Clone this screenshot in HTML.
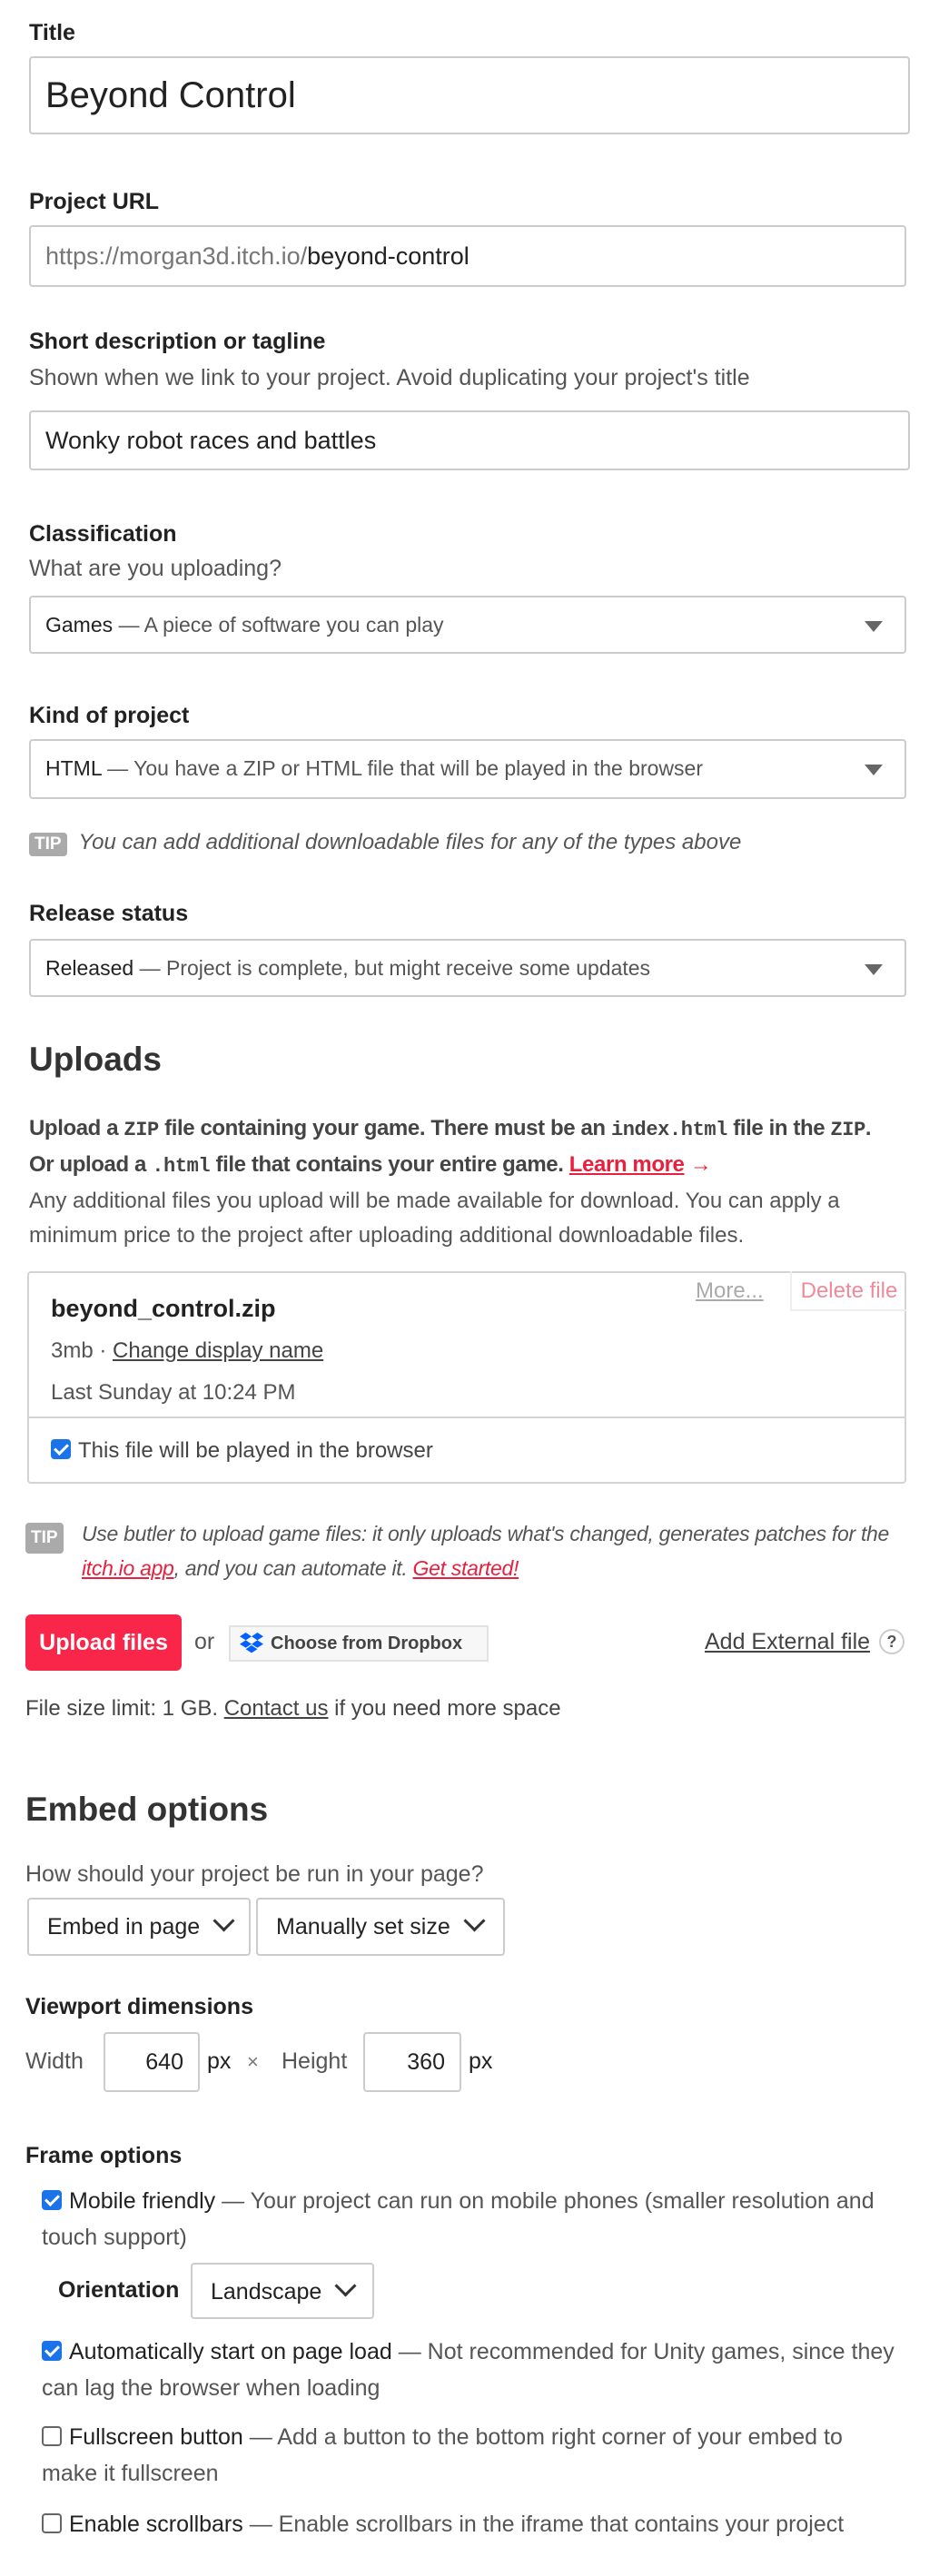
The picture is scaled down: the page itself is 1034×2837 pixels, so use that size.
<!DOCTYPE html>
<html><head><meta charset="utf-8"><style>
html,body{margin:0;padding:0;background:#fff}
body{zoom:2;width:517px;height:1418px;position:relative;overflow:hidden;font-family:"Liberation Sans",sans-serif;color:#222}
.a{position:absolute;white-space:nowrap}
.lbl{font-weight:bold;font-size:12.5px;color:#222}
.sub{font-size:12.5px;color:#555}
.box{position:absolute;border:1px solid #ccc;border-radius:2px;box-sizing:border-box;background:#fff}
.sel{font-size:11.5px;color:#222;line-height:30px;padding-left:8px}
.sel .g{color:#555}
.tri{position:absolute;right:12px;top:13px;width:0;height:0;border-left:5px solid transparent;border-right:5px solid transparent;border-top:6px solid #666}
.tip{display:inline-block;background:#aaa;color:#fff;font-size:9.5px;font-weight:bold;padding:1px 3px;border-radius:2px;font-style:normal}
.it{font-style:italic;font-size:12px;color:#555}
.red{color:#e8203e;text-decoration:underline}
.mono{font-family:"Liberation Mono",monospace;font-weight:bold;font-size:11px}
.cb{display:inline-block;width:11px;height:11px;border-radius:2px;vertical-align:-1px;margin-right:4px;box-sizing:border-box}
.cb.on{background:#1a73e8;position:relative}
.cb.on:after{content:"";position:absolute;left:3.5px;top:1px;width:3px;height:6px;border:solid #fff;border-width:0 1.6px 1.6px 0;transform:rotate(45deg)}
.cb.off{border:1px solid #666;background:#fff}
.chev{display:inline-block;width:7px;height:7px;border-right:1.5px solid #333;border-bottom:1.5px solid #333;transform:rotate(45deg);margin-left:9px;vertical-align:3px}
.dd{font-size:12.5px;color:#222;line-height:30px;padding-left:10px}
.opt{font-size:12.5px;color:#222}
.opt .g{color:#555}
</style></head><body>

<div class="a lbl" style="left:16px;top:11px">Title</div>
<div class="box" style="left:16px;top:31px;width:485px;height:43px;font-size:20px;line-height:41px;padding-left:8px;color:#222">Beyond Control</div>

<div class="a lbl" style="left:16px;top:104px">Project URL</div>
<div class="box" style="left:16px;top:124px;width:483px;height:34px;font-size:13.5px;line-height:32px;padding-left:8px"><span style="color:#777">https://morgan3d.itch.io/</span>beyond-control</div>

<div class="a lbl" style="left:16px;top:181px">Short description or tagline</div>
<div class="a sub" style="left:16px;top:201px">Shown when we link to your project. Avoid duplicating your project's title</div>
<div class="box" style="left:16px;top:226px;width:485px;height:33px;font-size:13.5px;line-height:31px;padding-left:8px">Wonky robot races and battles</div>

<div class="a lbl" style="left:16px;top:287px">Classification</div>
<div class="a sub" style="left:16px;top:306px">What are you uploading?</div>
<div class="box sel" style="left:16px;top:328px;width:483px;height:32px">Games <span class="g">— A piece of software you can play</span><div class="tri"></div></div>

<div class="a lbl" style="left:16px;top:387px">Kind of project</div>
<div class="box sel" style="left:16px;top:407px;width:483px;height:33px">HTML <span class="g">— You have a ZIP or HTML file that will be played in the browser</span><div class="tri"></div></div>

<div class="a it" style="left:16px;top:457px"><span class="tip">TIP</span>&nbsp; You can add additional downloadable files for any of the types above</div>

<div class="a lbl" style="left:16px;top:496px">Release status</div>
<div class="box sel" style="left:16px;top:517px;width:483px;height:32px">Released <span class="g">— Project is complete, but might receive some updates</span><div class="tri"></div></div>

<div class="a" style="left:16px;top:573px;font-size:18.5px;font-weight:bold;color:#333">Uploads</div>

<div class="a" style="left:16px;top:612px;font-size:12px;font-weight:bold;color:#444;line-height:19px;letter-spacing:-0.2px">Upload a <span class="mono">ZIP</span> file containing your game. There must be an <span class="mono">index.html</span> file in the <span class="mono">ZIP</span>.<br>Or upload a <span class="mono">.html</span> file that contains your entire game. <span class="red">Learn more</span> <span style="color:#e8203e">→</span></div>
<div class="a" style="left:16px;top:652px;font-size:12px;color:#555;line-height:19px">Any additional files you upload will be made available for download. You can apply a<br>minimum price to the project after uploading additional downloadable files.</div>

<div class="box" style="left:15px;top:700px;width:484px;height:117px;border-color:#d4d4d4">
 <div class="a" style="left:12px;top:12px;font-size:13.5px;font-weight:bold;color:#222">beyond_control.zip</div>
 <div class="a" style="left:12px;top:36px;font-size:12px;color:#555">3mb · <span style="text-decoration:underline;color:#444">Change display name</span></div>
 <div class="a" style="left:12px;top:59px;font-size:12px;color:#555">Last Sunday at 10:24 PM</div>
 <div class="a" style="left:0;top:79px;width:482px;border-top:1px solid #d4d4d4"></div>
 <div class="a" style="left:12px;top:91px;font-size:12px;color:#444"><span class="cb on"></span>This file will be played in the browser</div>
 <div class="a" style="left:367px;top:3px;font-size:12px;color:#aaa;text-decoration:underline">More...</div>
 <div class="a" style="left:419px;top:-1px;width:64px;height:22px;border:1px solid #eee;border-top:none;border-right:none;box-sizing:border-box;font-size:12px;color:#f08a9a;line-height:22px;text-align:center">Delete file</div>
</div>

<div class="a" style="left:14px;top:835px;width:30px;height:20px;"><span class="tip" style="font-size:9.5px;padding:3px 3px">TIP</span></div>
<div class="a it" style="left:45px;top:835px;line-height:19px;font-size:11.5px;letter-spacing:-0.15px">Use butler to upload game files: it only uploads what's changed, generates patches for the<br><span class="red">itch.io app</span>, and you can automate it. <span class="red">Get started!</span></div>

<div class="a" style="left:14px;top:889px;width:86px;height:31px;background:#fa2649;border-radius:3px;color:#fff;font-weight:bold;font-size:12.5px;line-height:31px;text-align:center">Upload files</div>
<div class="a" style="left:107px;top:897px;font-size:12.5px;color:#555">or</div>
<div class="a" style="left:126px;top:895px;width:143px;height:20px;border:1px solid #e2e2e2;background:#f7f7f7;box-sizing:border-box;font-size:10px;font-weight:bold;color:#444;line-height:18px;padding-left:22px">
 <svg style="position:absolute;left:5px;top:3px" width="13" height="12" viewBox="0 0 13 12"><g fill="#0061fe"><path d="M3.3 0L0 2.1l3.3 2.1 3.2-2.1zM9.7 0L6.5 2.1l3.2 2.1L13 2.1zM0 6.3l3.3 2.1 3.2-2.1-3.2-2.1zM9.7 4.2L6.5 6.3l3.2 2.1L13 6.3zM3.3 9.1l3.2 2.1 3.2-2.1-3.2-2.1z"/></g></svg>Choose from Dropbox</div>
<div class="a" style="left:388px;top:897px;font-size:12.5px;color:#444;text-decoration:underline">Add External file</div>
<div class="a" style="left:484px;top:897px;width:14px;height:14px;border:1px solid #ccc;border-radius:50%;box-sizing:border-box;font-size:9px;font-weight:bold;text-align:center;line-height:12px;color:#555">?</div>

<div class="a" style="left:14px;top:934px;font-size:12px;color:#444">File size limit: 1 GB. <span style="text-decoration:underline">Contact us</span> if you need more space</div>

<div class="a" style="left:14px;top:986px;font-size:18.5px;font-weight:bold;color:#333">Embed options</div>
<div class="a sub" style="left:14px;top:1025px">How should your project be run in your page?</div>
<div class="box dd" style="left:15px;top:1045px;width:123px;height:32px">Embed in page<span class="chev"></span></div>
<div class="box dd" style="left:141px;top:1045px;width:137px;height:32px">Manually set size<span class="chev"></span></div>

<div class="a lbl" style="left:14px;top:1098px">Viewport dimensions</div>
<div class="a sub" style="left:14px;top:1128px">Width</div>
<div class="box" style="left:57px;top:1119px;width:53px;height:33px;font-size:12.5px;line-height:31px;text-align:right;padding-right:8px">640</div>
<div class="a" style="left:114px;top:1128px;font-size:12.5px">px</div>
<div class="a" style="left:136px;top:1129px;font-size:11px;color:#777">×</div>
<div class="a sub" style="left:155px;top:1128px">Height</div>
<div class="box" style="left:200px;top:1119px;width:54px;height:33px;font-size:12.5px;line-height:31px;text-align:right;padding-right:8px">360</div>
<div class="a" style="left:258px;top:1128px;font-size:12.5px">px</div>

<div class="a lbl" style="left:14px;top:1180px">Frame options</div>
<div class="a opt" style="left:23px;top:1202px;line-height:20px"><span class="cb on"></span>Mobile friendly <span class="g">— Your project can run on mobile phones (smaller resolution and<br>touch support)</span></div>
<div class="a lbl" style="left:32px;top:1254px">Orientation</div>
<div class="box dd" style="left:105px;top:1246px;width:101px;height:31px">Landscape<span class="chev"></span></div>
<div class="a opt" style="left:23px;top:1285px;line-height:20px"><span class="cb on"></span>Automatically start on page load <span class="g">— Not recommended for Unity games, since they<br>can lag the browser when loading</span></div>
<div class="a opt" style="left:23px;top:1332px;line-height:20px"><span class="cb off"></span>Fullscreen button <span class="g">— Add a button to the bottom right corner of your embed to<br>make it fullscreen</span></div>
<div class="a opt" style="left:23px;top:1380px;line-height:20px"><span class="cb off"></span>Enable scrollbars <span class="g">— Enable scrollbars in the iframe that contains your project</span></div>

</body></html>
